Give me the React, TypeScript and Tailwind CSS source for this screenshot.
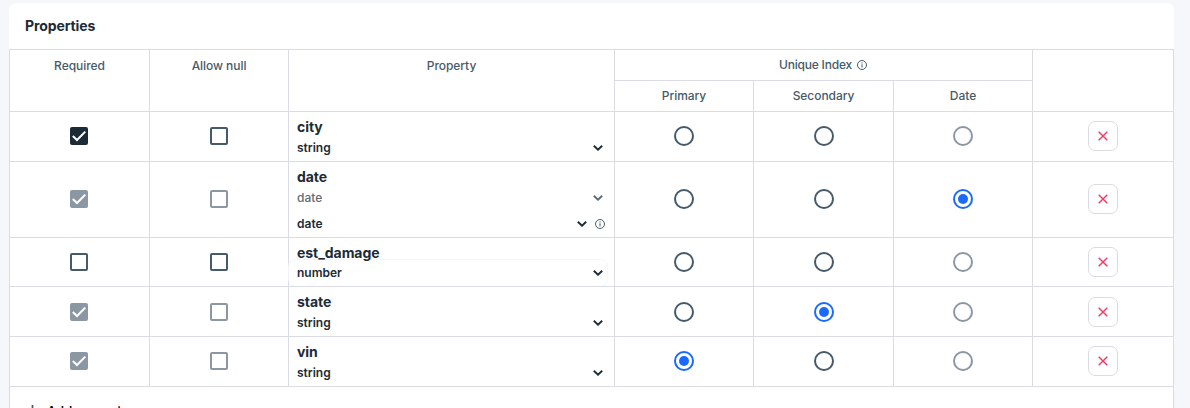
import React from "react";

type Choice = "primary" | "secondary" | "date" | null;
type Field = {
  name: string;
  type: string;
  height: string;
  shift: string;
  checked: boolean;
  locked: boolean;
  index: Choice;
  format?: string;
  focused?: boolean;
};

const fields: Field[] = [
  { name: "city", type: "string", height: "h-[50px]", shift: "pb-0.5", checked: true, locked: false, index: null },
  { name: "date", type: "date", height: "h-[76px]", shift: "pb-0.5", checked: true, locked: true, index: "date", format: "date" },
  { name: "est_damage", type: "number", height: "h-[49px]", shift: "pb-0", checked: false, locked: false, index: null, focused: true },
  { name: "state", type: "string", height: "h-[50px]", shift: "pb-0", checked: true, locked: true, index: "secondary" },
  { name: "vin", type: "string", height: "h-[50px]", shift: "pb-0.5", checked: true, locked: true, index: "primary" },
];

const grid = "grid grid-cols-[140px_139px_326px_139px_140px_139px_142px]";
const cell = "border-l border-t border-[#dbdbe5]";

function Checkbox({ checked, locked }: { checked: boolean; locked: boolean }) {
  if (checked) {
    return (
      <span className={`flex size-[18px] items-center justify-center rounded-[2px] ${locked ? "bg-[#8b98a4]" : "bg-[#1c2b36]"}`}>
        <svg width="18" height="18" viewBox="0 0 18 18" fill="none" stroke="#fff" strokeWidth="2">
          <path d="M2.8 9 7 13 15.3 4.6" />
        </svg>
      </span>
    );
  }
  return <span className={`size-[18px] rounded-[2px] border-2 ${locked ? "border-[#8b98a4]" : "border-[#465a69]"}`} />;
}

function Radio({ on, muted }: { on: boolean; muted?: boolean }) {
  return (
    <span
      className={`flex size-5 items-center justify-center rounded-full border-2 ${
        on ? "border-[#1a6aff]" : muted ? "border-[#8b98a4]" : "border-[#465a69]"
      }`}
    >
      {on && <span className="size-[10px] rounded-full bg-[#1a6aff]" />}
    </span>
  );
}

function Chevron({ muted }: { muted?: boolean }) {
  return (
    <svg width="10" height="6" viewBox="0 0 10 6" fill="none" stroke={muted ? "#5f6b73" : "#1c2b36"} strokeWidth="1.9">
      <path d="M.8.7 5 4.7 9.2.7" />
    </svg>
  );
}

function Info() {
  return (
    <svg width="10" height="10" viewBox="0 0 10 10" fill="none" stroke="#465a69" strokeWidth="1">
      <circle cx="5" cy="5" r="4.5" />
      <path d="M5 4.3v3.2M5 2.4v1.1" />
    </svg>
  );
}

function Row({ field }: { field: Field }) {
  const center = `${cell} flex items-center justify-center ${field.shift}`;
  return (
    <div className={`${grid} ${field.height}`}>
      <div className={`${center} pr-px`}><Checkbox checked={field.checked} locked={field.locked} /></div>
      <div className={center}><Checkbox checked={false} locked={field.locked} /></div>
      <div className={`${cell} min-w-0 pt-[5px]`}>
        <div className="pl-2 text-[14px] leading-5 font-bold tracking-[-0.05px]">{field.name}</div>
        <div
          className={`mr-[7px] flex items-center justify-between pr-1 pl-2 text-[12px] leading-5 ${
            field.format ? "font-medium text-[#5f6b73]" : "font-semibold"
          } ${field.focused ? "-mt-[3px] h-[26px] rounded-[7px] shadow-[0_0_1px_1px_#f5f6f9]" : "h-[22px]"}`}
        >
          {field.type}
          <Chevron muted={!!field.format} />
        </div>
        {field.format && (
          <div className="mt-[5px] flex h-5 items-center pr-[9px] pl-2 text-[12px] font-semibold">
            <span className="flex-1">{field.format}</span>
            <Chevron />
            <span className="ml-2"><Info /></span>
          </div>
        )}
      </div>
      <div className={center}><Radio on={field.index === "primary"} /></div>
      <div className={center}><Radio on={field.index === "secondary"} /></div>
      <div className={center}><Radio on={field.index === "date"} muted /></div>
      <div className={`${center} border-r`}>
        <button className="flex size-[30px] items-center justify-center rounded-[7px] border border-[#dbdbe5]">
          <svg width="10" height="10" viewBox="0 0 10 10" stroke="#f23d64" strokeWidth="1.5">
            <path d="m.7.7 8.6 8.6M9.3.7.7 9.3" />
          </svg>
        </button>
      </div>
    </div>
  );
}

export default function App() {
  const heading = `${cell} row-span-2 pt-[6px] text-center`;
  return (
    <div className="h-[408px] overflow-hidden bg-[#f6f7fb] pt-[3px] pl-[9px] font-['Inter',sans-serif] text-[#1c2b36]">
      <div className="h-[420px] w-[1165px] rounded-t-[7px] bg-white">
        <h2 className="h-[46px] pt-[13px] pl-4 text-[14px] leading-5 font-bold tracking-[-0.1px]">Properties</h2>
        <div className={`${grid} grid-rows-[31px_31px] text-[12px] leading-5 font-medium tracking-[-0.05px] text-[#465a69]`}>
          <div className={heading}>Required</div>
          <div className={heading}>Allow null</div>
          <div className={heading}>Property</div>
          <div className={`${cell} col-span-3 flex items-center justify-center gap-[5px] pr-px tracking-[-0.2px]`}>
            Unique Index <Info />
          </div>
          <div className={`${heading} border-r`} />
          <div className={`${cell} pt-[5px] text-center`}>Primary</div>
          <div className={`${cell} pt-[5px] text-center`}>Secondary</div>
          <div className={`${cell} pt-[5px] text-center`}>Date</div>
        </div>
        {fields.map((field) => <Row key={field.name} field={field} />)}
        <div className="flex h-12 items-start gap-[9px] border-x border-t border-[#dbdbe5] pt-[14px] pl-[17px] text-[13px] leading-5 font-medium text-black">
          <svg className="mt-[4px]" width="11" height="11" viewBox="0 0 11 11" stroke="#465a69" strokeWidth="1.7">
            <path d="M5.5 0v11M0 5.5h11" />
          </svg>
          Add property
        </div>
      </div>
    </div>
  );
}
